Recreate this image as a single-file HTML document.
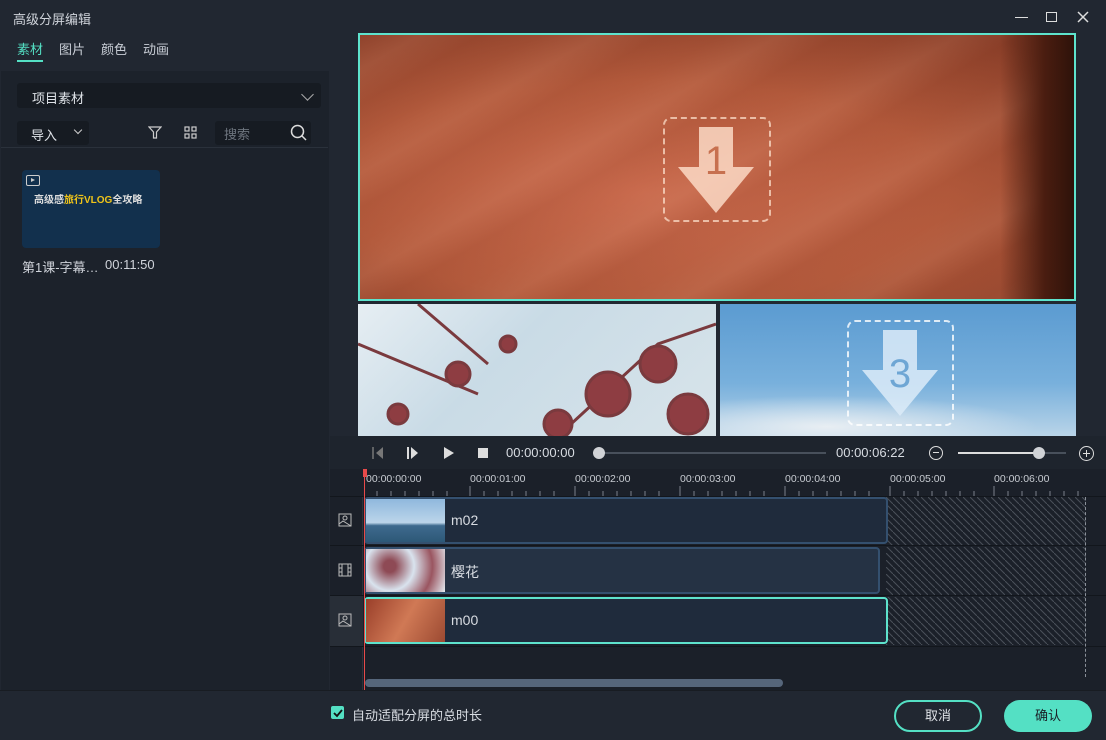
<!DOCTYPE html><html><head><meta charset="utf-8"><style>
*{margin:0;padding:0;box-sizing:border-box}
body{width:1106px;height:740px;background:#212731;font-family:"Liberation Sans","Noto Sans CJK SC",sans-serif;color:#c9ced6;position:relative;overflow:hidden;font-size:13px}
.a{position:absolute}
</style></head><body>
<div class="a" style="left:13px;top:9px;font-size:13px;color:#cfd3da">高级分屏编辑</div>
<div class="a" style="left:1015px;top:17px;width:13px;height:1.3px;background:#ddd"></div>
<div class="a" style="left:1046px;top:12px;width:11px;height:10px;border:1.5px solid #ddd"></div>
<svg class="a" style="left:1077px;top:11px" width="12" height="12"><path d="M1 1L11 11M11 1L1 11" stroke="#ddd" stroke-width="1.5"/></svg>
<div class="a" style="left:17px;top:39px;color:#54e0c4">素材</div>
<div class="a" style="left:17px;top:60px;width:26px;height:2px;background:#54e0c4"></div>
<div class="a" style="left:59px;top:39px">图片</div>
<div class="a" style="left:101px;top:39px">颜色</div>
<div class="a" style="left:143px;top:39px">动画</div>
<div class="a" style="left:1px;top:71px;width:328px;height:619px;background:#1c222b"></div>
<div class="a" style="left:1px;top:147px;width:327px;height:1px;background:#2a313b"></div>
<div class="a" style="left:17px;top:83px;width:304px;height:25px;background:#161b22;border-radius:3px"></div>
<div class="a" style="left:32px;top:88px;color:#dfe3e8">项目素材</div>
<div class="a" style="left:303px;top:90px;width:9px;height:9px;border-right:1.5px solid #aaa;border-bottom:1.5px solid #aaa;transform:rotate(45deg)"></div>
<div class="a" style="left:17px;top:121px;width:72px;height:24px;background:#161b22;border-radius:3px"></div>
<div class="a" style="left:31px;top:125px;color:#dfe3e8">导入</div>
<div class="a" style="left:75px;top:127px;width:6px;height:6px;border-right:1.3px solid #ccc;border-bottom:1.3px solid #ccc;transform:rotate(45deg)"></div>
<svg class="a" style="left:148px;top:125px" width="14" height="14"><path d="M1 2h12l-4.5 5v6h-3V7z" fill="none" stroke="#ccc" stroke-width="1.2"/></svg>
<svg class="a" style="left:184px;top:126px" width="13" height="13" fill="none" stroke="#ccc" stroke-width="1.2"><rect x="1" y="1" width="4" height="4"/><rect x="8" y="1" width="4" height="4"/><rect x="1" y="8" width="4" height="4"/><rect x="8" y="8" width="4" height="4"/></svg>
<div class="a" style="left:215px;top:121px;width:96px;height:24px;background:#161b22;border-radius:3px"></div>
<div class="a" style="left:224px;top:124px;color:#6d747e">搜索</div>
<svg class="a" style="left:290px;top:124px" width="17" height="17" fill="none" stroke="#ddd" stroke-width="1.5"><circle cx="7.5" cy="7.5" r="6"/><path d="M12 12l4 4"/></svg>
<div class="a" style="left:22px;top:170px;width:138px;height:78px;background:#12304d;border-radius:4px"></div>
<div class="a" style="left:26px;top:175px;width:14px;height:11px;border:1px solid #ccc;border-radius:2px"></div>
<div class="a" style="left:31px;top:178px;width:0;height:0;border-left:4px solid #ccc;border-top:2.5px solid transparent;border-bottom:2.5px solid transparent"></div>
<div class="a" style="left:34px;top:191px;font-size:10px;font-weight:bold;color:#ddd;white-space:nowrap">高级感<span style="color:#f0c419">旅行VLOG</span>全攻略</div>
<div class="a" style="left:22px;top:257px;color:#cfd3da">第1课-字幕…</div>
<div class="a" style="left:105px;top:257px;color:#cfd3da">00:11:50</div>
<!-- preview -->
<div class="a" style="left:358px;top:33px;width:718px;height:268px;background:radial-gradient(ellipse at 40% 60%,#c96a4d,#b35a3c 50%,#8a3f29 90%);border:2px solid #5ee3cd"></div>
<div class="a" style="left:360px;top:35px;width:714px;height:264px;background:repeating-linear-gradient(150deg,rgba(255,200,170,0) 0,rgba(255,200,170,.08) 30px,rgba(120,40,20,.08) 60px,rgba(255,200,170,0) 90px)"></div>
<div class="a" style="left:1000px;top:35px;width:74px;height:264px;background:linear-gradient(90deg,rgba(60,20,10,0),#4a1d10 60%,#2e120a)"></div>
<div class="a" style="left:663px;top:117px;width:108px;height:105px;border:2px dashed rgba(255,230,210,.7);border-radius:8px"></div>
<svg class="a" style="left:678px;top:127px" width="76" height="88"><path d="M21 0h34v40h21L38 86 0 40h21z" fill="rgba(255,225,205,.8)"/><text x="38" y="47" font-size="40" text-anchor="middle" fill="#c7704f" font-family="Liberation Sans">1</text></svg>
<div class="a" style="left:358px;top:304px;width:358px;height:132px;background:linear-gradient(135deg,#e6eef3,#c9dbe6 40%,#d8e4ea)"></div>
<svg class="a" style="left:358px;top:304px" width="358" height="132"><g stroke="#7a3a3e" stroke-width="3" fill="#8e3d42"><path d="M0 40 L120 90 M60 0 L130 60 M200 132 L300 40 L358 20" fill="none"/><circle cx="100" cy="70" r="12"/><circle cx="150" cy="40" r="8"/><circle cx="250" cy="90" r="22"/><circle cx="300" cy="60" r="18"/><circle cx="330" cy="110" r="20"/><circle cx="40" cy="110" r="10"/><circle cx="200" cy="120" r="14"/></g></svg>
<div class="a" style="left:720px;top:304px;width:356px;height:132px;background:linear-gradient(180deg,#5b9bd1,#78b0dc 60%,#b9d4e8)"></div>
<div class="a" style="left:720px;top:390px;width:356px;height:46px;background:radial-gradient(ellipse at 30% 80%,#e8eef3,rgba(255,255,255,0) 60%)"></div>
<div class="a" style="left:847px;top:320px;width:107px;height:106px;border:2px dashed rgba(255,255,255,.8);border-radius:8px"></div>
<svg class="a" style="left:862px;top:330px" width="76" height="88"><path d="M21 0h34v40h21L38 86 0 40h21z" fill="rgba(220,235,248,.85)"/><text x="38" y="57" font-size="40" text-anchor="middle" fill="#6ea6d4" font-family="Liberation Sans">3</text></svg>
<!-- controls -->
<div class="a" style="left:330px;top:436px;width:776px;height:33px;background:#1e242d"></div>
<svg class="a" style="left:370px;top:446px" width="130" height="14" fill="#ddd"><path d="M3 1v12" stroke="#777" stroke-width="1.5"/><path d="M13 1v12L6 7z" fill="#777"/><path d="M38 1v12" stroke="#ddd" stroke-width="2"/><path d="M41 1v12l7-6z"/><path d="M74 1v12l10-6z"/><rect x="108" y="2" width="10" height="10"/></svg>
<div class="a" style="left:506px;top:445px;font-size:13px;color:#d8dce2">00:00:00:00</div>
<div class="a" style="left:598px;top:452px;width:228px;height:2px;background:#48505b"></div>
<div class="a" style="left:593px;top:447px;width:12px;height:12px;border-radius:50%;background:#d0d2d6"></div>
<div class="a" style="left:836px;top:445px;color:#d8dce2">00:00:06:22</div>
<div class="a" style="left:929px;top:446px;width:14px;height:14px;border:1.3px solid #ddd;border-radius:50%"></div>
<div class="a" style="left:933px;top:452px;width:6px;height:1.3px;background:#ddd"></div>
<div class="a" style="left:958px;top:452px;width:108px;height:2px;background:#48505b"></div>
<div class="a" style="left:958px;top:452px;width:80px;height:2px;background:#ddd"></div>
<div class="a" style="left:1033px;top:447px;width:12px;height:12px;border-radius:50%;background:#d0d2d6"></div>
<div class="a" style="left:1079px;top:446px;width:15px;height:15px;border:1.3px solid #ddd;border-radius:50%"></div>
<div class="a" style="left:1083px;top:453px;width:7px;height:1.3px;background:#ddd"></div>
<div class="a" style="left:1086px;top:450px;width:1.3px;height:7px;background:#ddd"></div>
<!-- timeline -->
<div class="a" style="left:330px;top:469px;width:776px;height:221px;background:#1b2029"></div>
<div class="a" style="left:330px;top:496px;width:33px;height:194px;background:#1b2029;border-right:1px solid #2b323c"></div>
<div class="a" style="left:330px;top:596px;width:33px;height:50px;background:#282e37"></div>
<div class="a" style="left:330px;top:545px;width:776px;height:1px;background:#12161c"></div>
<div class="a" style="left:330px;top:595px;width:776px;height:1px;background:#12161c"></div>
<div class="a" style="left:330px;top:646px;width:776px;height:1px;background:#12161c"></div>
<div class="a" style="left:330px;top:496px;width:776px;height:1px;background:#12161c"></div>
<svg class="a" style="left:363px;top:470px" width="743" height="26" font-family="Liberation Sans" font-size="10.5" fill="#c8ccd2"><text x="3" y="12">00:00:00:00</text><text x="107" y="12">00:00:01:00</text><text x="212" y="12">00:00:02:00</text><text x="317" y="12">00:00:03:00</text><text x="422" y="12">00:00:04:00</text><text x="527" y="12">00:00:05:00</text><text x="631" y="12">00:00:06:00</text>
<g stroke="#7b818a"><path d="M107 16v10M212 16v10M317 16v10M422 16v10M527 16v10M631 16v10"/><path d="M14 21v5M28 21v5M42 21v5M56 21v5M70 21v5M84 21v5M121 21v5M135 21v5M149 21v5M163 21v5M177 21v5M191 21v5M226 21v5M240 21v5M254 21v5M268 21v5M282 21v5M296 21v5M331 21v5M345 21v5M359 21v5M373 21v5M387 21v5M401 21v5M436 21v5M450 21v5M464 21v5M478 21v5M492 21v5M506 21v5M541 21v5M555 21v5M569 21v5M583 21v5M597 21v5M611 21v5M645 21v5M659 21v5M673 21v5M687 21v5M701 21v5M715 21v5"/></g></svg>
<svg class="a" style="left:886px;top:497px" width="200" height="149"><defs><pattern id="h" width="7" height="7" patternUnits="userSpaceOnUse"><path d="M0 0L7 7" stroke="#4a505a" stroke-width="1"/></pattern></defs><rect width="200" height="48" fill="url(#h)"/><rect y="50" width="200" height="48" fill="url(#h)"/><rect y="100" width="200" height="48" fill="url(#h)"/></svg>
<div class="a" style="left:1085px;top:497px;width:0;height:180px;border-left:1px dashed #8a9099"></div>
<div class="a" style="left:364px;top:497px;width:524px;height:47px;background:#1f2b3c;border:2px solid #34506f;border-radius:4px"></div>
<div class="a" style="left:366px;top:499px;width:79px;height:43px;background:linear-gradient(180deg,#8fb8dd,#bcd5ea 55%,#3e6a8e 62%,#2d5877)"></div>
<div class="a" style="left:451px;top:512px;color:#d8dce2;font-size:14px">m02</div>
<div class="a" style="left:364px;top:547px;width:516px;height:47px;background:#253244;border:2px solid #34506f;border-radius:4px"></div>
<div class="a" style="left:366px;top:549px;width:79px;height:43px;background:radial-gradient(circle at 30% 40%,#8e4a55 10%,#d9e3ee 40%,#9a5560 70%,#e5ecf2)"></div>
<div class="a" style="left:451px;top:562px;color:#d8dce2;font-size:14px">樱花</div>
<div class="a" style="left:364px;top:597px;width:524px;height:47px;background:#1f2b3c;border:2px solid #5ee3cd;border-radius:4px"></div>
<div class="a" style="left:366px;top:599px;width:79px;height:43px;background:linear-gradient(120deg,#9a3f2a,#d07955 50%,#9c4a32)"></div>
<div class="a" style="left:451px;top:612px;color:#d8dce2;font-size:14px">m00</div>
<svg class="a" style="left:338px;top:513px" width="15" height="120" fill="none" stroke="#bbb" stroke-width="1"><rect x="1" y="1" width="12" height="12"/><circle cx="7" cy="5" r="2"/><path d="M1 11l4-3 8 5"/><rect x="1" y="51" width="12" height="12"/><path d="M4 51v12M10 51v12M1 55h3M1 59h3M10 55h3M10 59h3"/><rect x="1" y="101" width="12" height="12"/><circle cx="7" cy="105" r="2"/><path d="M1 111l4-3 8 5"/></svg>
<div class="a" style="left:364px;top:470px;width:1px;height:220px;background:#e84a4a"></div>
<div class="a" style="left:363px;top:469px;width:4px;height:8px;background:#e84a4a"></div>
<div class="a" style="left:365px;top:679px;width:418px;height:8px;background:#56667b;border-radius:4px"></div>
<!-- footer -->
<div class="a" style="left:0;top:690px;width:1106px;height:1px;background:#181c22"></div>
<div class="a" style="left:331px;top:706px;width:13px;height:13px;background:#54e0c4;border-radius:2px"></div>
<svg class="a" style="left:331px;top:706px" width="13" height="13"><path d="M3 7l3 3 5-6" stroke="#111" stroke-width="1.8" fill="none"/></svg>
<div class="a" style="left:352px;top:705px;color:#d8dce2">自动适配分屏的总时长</div>
<div class="a" style="left:894px;top:700px;width:88px;height:32px;border:2px solid #54e0c4;border-radius:16px;text-align:center;line-height:28px;color:#e0e3e8">取消</div>
<div class="a" style="left:1004px;top:700px;width:88px;height:32px;background:#54e0c4;border-radius:16px;text-align:center;line-height:32px;color:#1a1f26">确认</div>
</body></html>
